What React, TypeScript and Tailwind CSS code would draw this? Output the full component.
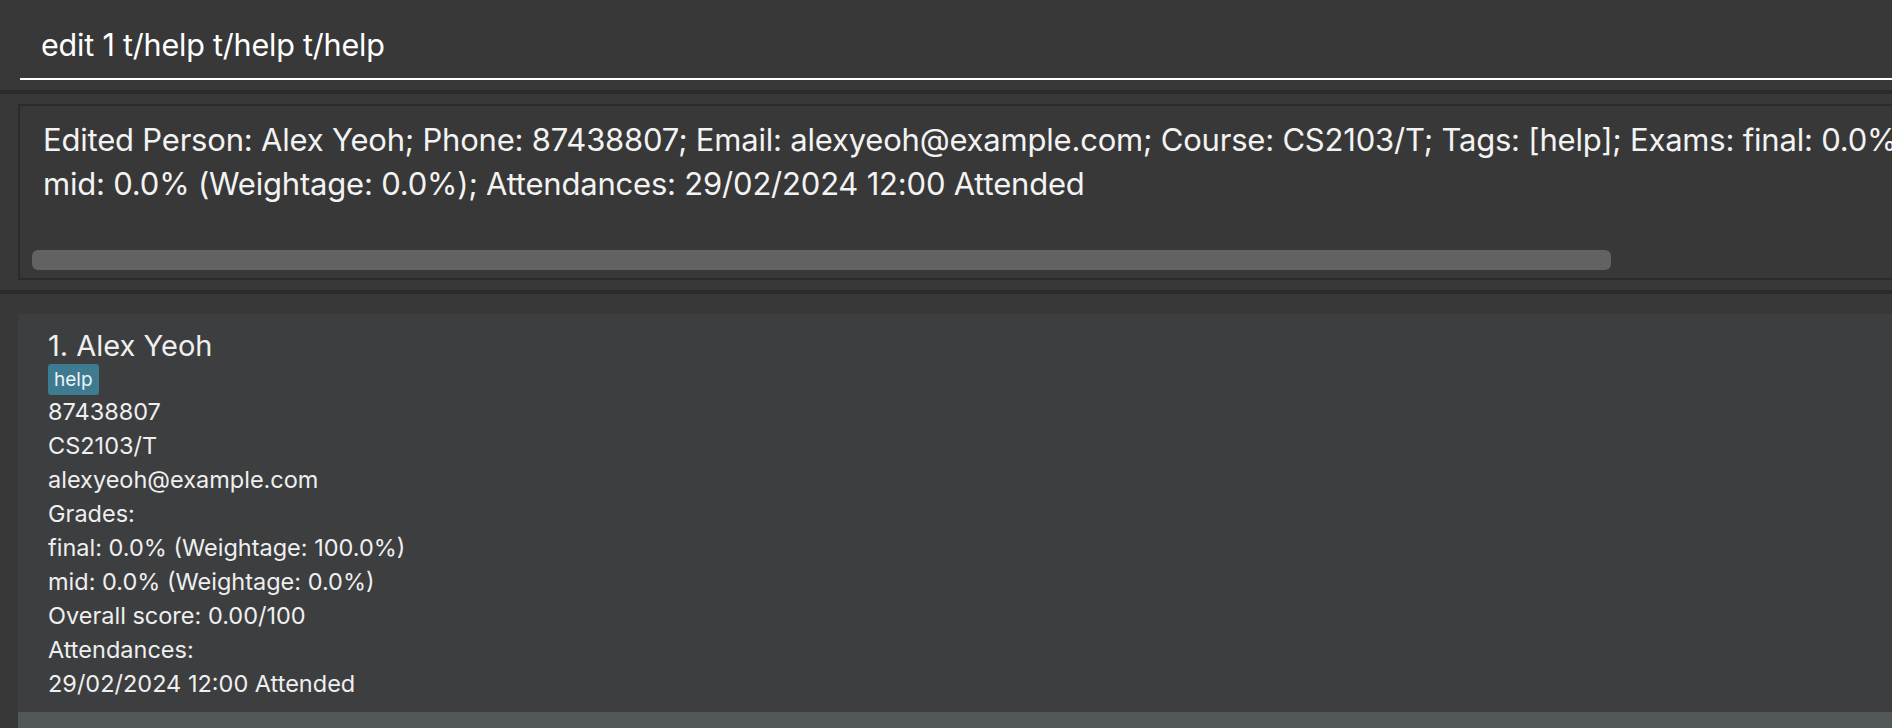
const person = {
  index: 1,
  name: "Alex Yeoh",
  tags: ["help"],
  phone: "87438807",
  course: "CS2103/T",
  email: "alexyeoh@example.com",
  grades: ["final: 0.0% (Weightage: 100.0%)", "mid: 0.0% (Weightage: 0.0%)"],
  overall: "0.00/100",
  attendances: ["29/02/2024 12:00 Attended"],
};

const feedback = [
  "Edited Person: Alex Yeoh; Phone: 87438807; Email: alexyeoh@example.com; Course: CS2103/T; Tags: [help]; Exams: final: 0.0% (Weightage: 100.0%);",
  "mid: 0.0% (Weightage: 0.0%); Attendances: 29/02/2024 12:00 Attended",
];

export default function App() {
  return (
    <div
      className="h-[728px] w-[1892px] overflow-hidden bg-[#383838] text-white"
      style={{ fontFamily: "Inter, 'Noto Sans', sans-serif" }}
    >
      {/* Command box */}
      <div className="h-[90px] pl-[20px] pt-[14px]">
        <div className="flex h-[66px] items-center border-b-2 border-white pl-[21px] pb-[3px] text-[30.5px] tracking-[-0.2px]">
          edit 1 t/help t/help t/help
        </div>
      </div>
      <div className="h-[4px] bg-[#2b2b2b]" />

      {/* Result display */}
      <div className="h-[196px] py-[10px] pl-[18px]">
        <div className="relative h-[176px] w-[1900px] overflow-hidden border-2 border-[#2b2b2b] bg-[#383838]">
          <div className="whitespace-pre pl-[23px] pt-[12px] text-[31px] leading-[44px] text-[#f3f3f3] tracking-[-0.2px]">
            {feedback.map((l) => (
              <div key={l}>{l}</div>
            ))}
          </div>
          <div className="absolute bottom-[8px] left-[12px] h-[20px] w-[1579px] rounded-[6px] bg-[#626262]" />
        </div>
      </div>
      <div className="h-[4px] bg-[#2b2b2b]" />

      {/* Person list */}
      <div className="pl-[18px] pt-[20px]">
        <div className="h-[398px] bg-[#3d3e40] pl-[30px] pt-[15px] text-[#efefef]">
          <div className="text-[29px] leading-[34px]">
            {person.index}. {person.name}
          </div>
          <div className="mt-[1px] flex gap-1">
            {person.tags.map((t) => (
              <span
                key={t}
                className="rounded-[3px] bg-[#3e7b91] px-[6px] text-[19px] leading-[31px] text-[#eef3f5]"
              >
                {t}
              </span>
            ))}
          </div>
          <div className="text-[23.5px] leading-[34px]">
            <div>{person.phone}</div>
            <div>{person.course}</div>
            <div>{person.email}</div>
            <div>Grades:</div>
            {person.grades.map((g) => (
              <div key={g}>{g}</div>
            ))}
            <div>Overall score: {person.overall}</div>
            <div>Attendances:</div>
            {person.attendances.map((a) => (
              <div key={a}>{a}</div>
            ))}
          </div>
        </div>
        <div className="h-[40px] bg-[#515658]" />
      </div>
    </div>
  );
}
